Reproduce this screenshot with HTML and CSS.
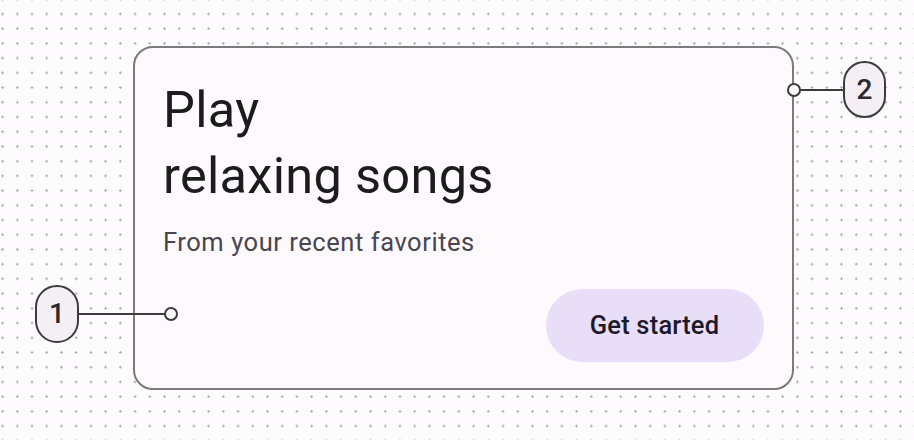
FILE: index.html
```html
<!DOCTYPE html>
<html lang="en">
<head>
<meta charset="utf-8">
<title>Card anatomy</title>
<link rel="stylesheet" href="styles.css">
</head>
<body>
<div class="canvas">
  <div class="card">
    <h1 class="title">Play<br>relaxing songs</h1>
    <p class="subtitle">From your recent favorites</p>
    <div class="actions">
      <button class="btn">Get started</button>
    </div>
  </div>

  <svg class="leaders" width="914" height="440" viewBox="0 0 914 440" aria-hidden="true">
    <line x1="79" y1="314" x2="165" y2="314" />
    <circle cx="171" cy="314" r="6" />
    <line x1="800" y1="90" x2="843" y2="90" />
    <circle cx="794" cy="90" r="6" />
  </svg>
  <div class="badge badge-1">1</div>
  <div class="badge badge-2">2</div>
</div>
</body>
</html>
```

FILE: styles.css
```css
html, body {
  margin: 0;
  padding: 0;
}
body {
  width: 914px;
  height: 440px;
  overflow: hidden;
  background-color: #fdfbfd;
  background-image: radial-gradient(circle, #b0aeb2 1px, rgba(176,174,178,0) 1.4px);
  background-size: 14.73px 14.73px;
  background-position: -4.8px 6.6px;
  font-family: Roboto, "Noto Sans", "Liberation Sans", sans-serif;
}
.canvas {
  position: relative;
  width: 914px;
  height: 440px;
  padding: 46px 0 0 133px;
  box-sizing: border-box;
}
.card {
  width: 661px;
  height: 344px;
  box-sizing: border-box;
  border: 2px solid #7d7a7f;
  border-radius: 20px;
  background: #fdf9fd;
  padding: 28.5px 28.5px 26.5px 28px;
  display: flex;
  flex-direction: column;
}
.title {
  margin: 0;
  font-weight: 400;
  font-size: 50.5px;
  line-height: 66px;
  color: #1d1b20;
  letter-spacing: 0.3px;
}
.subtitle {
  margin: 17px 0 0 0;
  font-size: 25.5px;
  line-height: 32px;
  color: #49454f;
  letter-spacing: 0.55px;
}
.actions {
  margin-top: auto;
  display: flex;
  justify-content: flex-end;
}
.btn {
  width: 218px;
  height: 73px;
  border: none;
  border-radius: 37px;
  background: #e8def8;
  color: #1d192b;
  font-family: Roboto, "Noto Sans", "Liberation Sans", sans-serif;
  font-weight: 500;
  font-size: 25.5px;
  letter-spacing: 0.2px;
  padding: 0;
}
.leaders {
  position: absolute;
  left: 0;
  top: 0;
}
.leaders line {
  stroke: #3d3b3f;
  stroke-width: 2;
}
.leaders circle {
  fill: #fdfbfd;
  stroke: #3d3b3f;
  stroke-width: 2;
}
.badge {
  position: absolute;
  width: 44px;
  height: 58px;
  box-sizing: border-box;
  border: 2px solid #3d3b3f;
  border-radius: 22px;
  background: #f3eff4;
  color: #2a282c;
  font-size: 28px;
  font-weight: 500;
  line-height: 54px;
  text-align: center;
}
.badge-1 {
  left: 35px;
  top: 285px;
}
.badge-2 {
  left: 843px;
  top: 61px;
  width: 43px;
  height: 57px;
  line-height: 53px;
}
```
